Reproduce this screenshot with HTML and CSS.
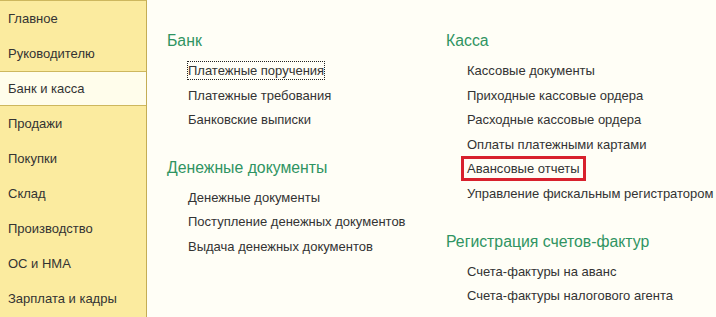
FILE: index.html
```html
<!DOCTYPE html>
<html lang="ru">
<head>
    <meta charset="UTF-8">
    <title>Банк и касса</title>
    <link rel="stylesheet" href="styles.css">
</head>
<body>

    <div class="layout">
        <ul class="sections">
            <li class="section-item">Главное</li>
            <li class="section-item">Руководителю</li>
            <li class="section-item active">Банк и касса</li>
            <li class="section-item">Продажи</li>
            <li class="section-item">Покупки</li>
            <li class="section-item">Склад</li>
            <li class="section-item">Производство</li>
            <li class="section-item">ОС и НМА</li>
            <li class="section-item">Зарплата и кадры</li>
        </ul>

        <div class="panel">
            <div class="column">
                <div class="group">
                    <h2>Банк</h2>
                    <div class="cmd"><span class="focused">Платежные поручения</span></div>
                    <div class="cmd"><span>Платежные требования</span></div>
                    <div class="cmd"><span>Банковские выписки</span></div>
                </div>
                <div class="group">
                    <h2>Денежные документы</h2>
                    <div class="cmd"><span>Денежные документы</span></div>
                    <div class="cmd"><span>Поступление денежных документов</span></div>
                    <div class="cmd"><span>Выдача денежных документов</span></div>
                </div>
            </div>

            <div class="column">
                <div class="group">
                    <h2>Касса</h2>
                    <div class="cmd"><span>Кассовые документы</span></div>
                    <div class="cmd"><span>Приходные кассовые ордера</span></div>
                    <div class="cmd"><span>Расходные кассовые ордера</span></div>
                    <div class="cmd"><span>Оплаты платежными картами</span></div>
                    <div class="cmd"><span class="marked">Авансовые отчеты</span></div>
                    <div class="cmd"><span>Управление фискальным регистратором</span></div>
                </div>
                <div class="group">
                    <h2>Регистрация счетов-фактур</h2>
                    <div class="cmd"><span>Счета-фактуры на аванс</span></div>
                    <div class="cmd"><span>Счета-фактуры налогового агента</span></div>
                </div>
            </div>
        </div>
    </div>

</body>
</html>
```

FILE: styles.css
```css
body {
    margin: 0;
    font-family: "Liberation Sans", Arial, sans-serif;
    font-size: 13px;
    color: #333;
    background-color: #fffef6;
}
.layout {
    display: flex;
    height: 317px;
    overflow: hidden;
}
.sections {
    list-style: none;
    margin: 0;
    padding: 0;
    width: 147px;
    flex-shrink: 0;
    box-sizing: border-box;
    background-color: #fbeb9f;
    border-top: 1px solid #cdb75e;
    border-right: 1px solid #c4ad55;
}
.section-item {
    height: 35px;
    line-height: 35px;
    padding-left: 8px;
    box-sizing: border-box;
    white-space: nowrap;
}
.section-item.active {
    background-color: #fffdeb;
    border-top: 1px solid #cdb75e;
    border-bottom: 1px solid #cdb75e;
    line-height: 33px;
}
.panel {
    display: grid;
    grid-template-columns: 279px auto;
    padding: 31px 0 0 20px;
}
.group {
    margin-bottom: 26px;
}
h2 {
    margin: 0 0 7px;
    font-size: 15.8px;
    font-weight: normal;
    line-height: 20px;
    color: #2f9462;
}
.cmd {
    height: 24.6px;
    line-height: 24.6px;
    padding-left: 21px;
    white-space: nowrap;
}
.cmd span {
    display: inline-block;
    line-height: 17px;
    vertical-align: middle;
}
.cmd .focused {
    outline: 1px dotted #222;
}
.cmd .marked {
    padding: 0 2px;
    margin-left: -2px;
    outline: 3px solid #d8212d;
    outline-offset: 1px;
}
```
